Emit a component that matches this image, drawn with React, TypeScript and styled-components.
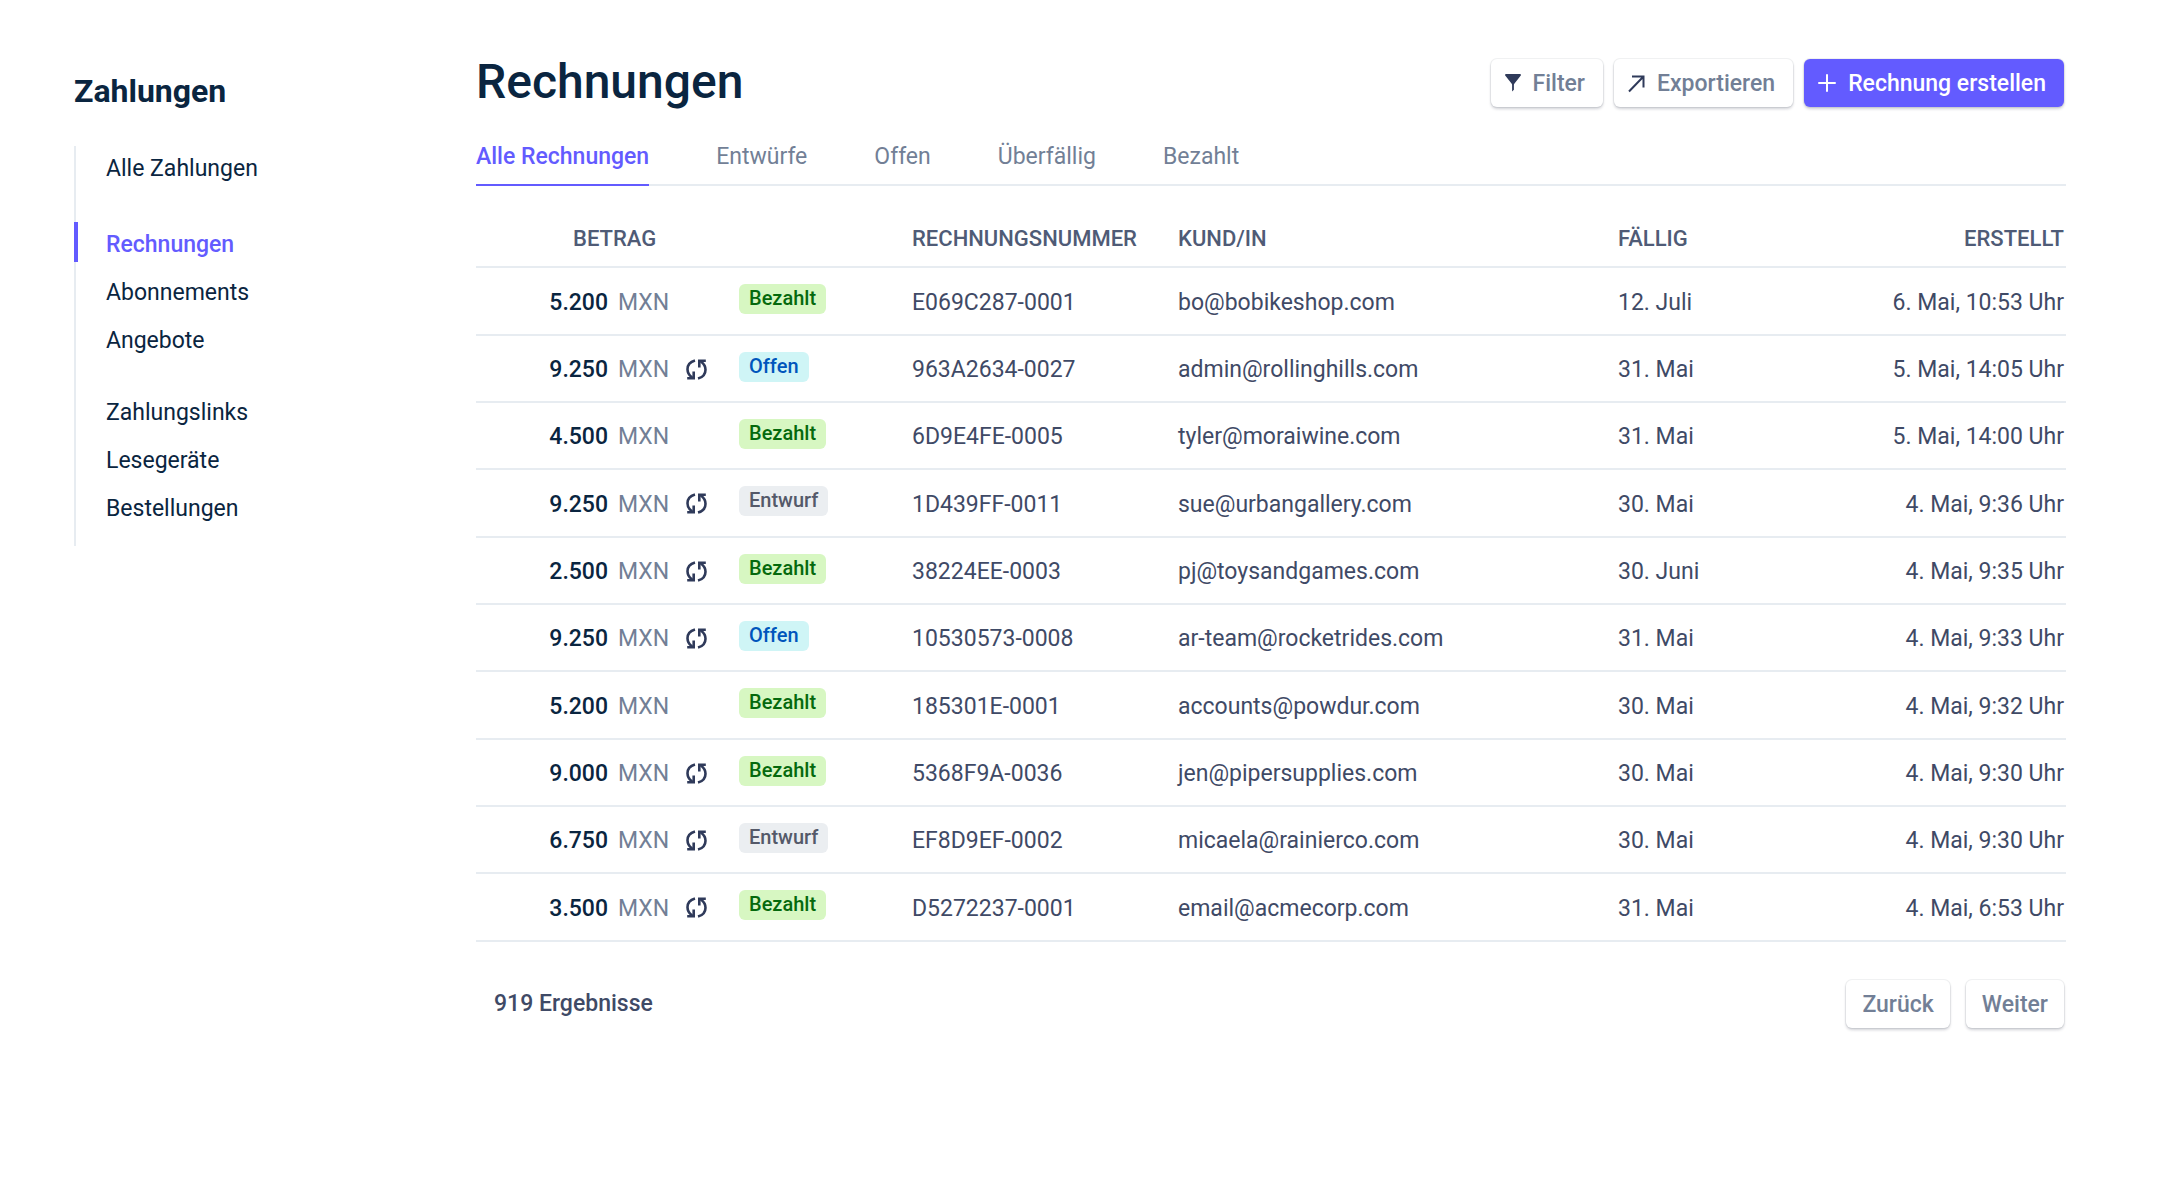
import React from "react";
import styled, { createGlobalStyle, css } from "styled-components";

const color = {
  ink: "#0a2540",
  text: "#3f4a66",
  heading: "#4f5b76",
  muted: "#727f96",
  line: "#e7ecf1",
  accent: "#635bff",
  icon: "#2f3a5a",
};

const GlobalStyle = createGlobalStyle`
  *, *::before, *::after { box-sizing: border-box; }
  body {
    margin: 0;
    background: #fff;
    color: ${color.text};
    font-family: Roboto, "Liberation Sans", Arial, sans-serif;
    font-size: 23px;
    line-height: 32px;
  }
  h1, h2, p, ul { margin: 0; padding: 0; }
`;

const Page = styled.div`
  display: flex;
  padding: 48px 94px 96px 74px;
`;

const Sidebar = styled.aside`
  flex: 0 0 402px;
  padding-top: 23px;
`;

const SidebarTitle = styled.h2`
  color: ${color.ink};
  font-size: 32px;
  font-weight: 700;
  line-height: 40px;
`;

const Nav = styled.nav`
  display: flex;
  flex-direction: column;
  gap: 32px;
  margin-top: 35px;
  padding-bottom: 20px;
  box-shadow: inset 2px 0 0 ${color.line};
`;

const NavGroup = styled.ul`
  display: flex;
  flex-direction: column;
  gap: 8px;
  list-style: none;

  &:first-child { padding-bottom: 4px; }
`;

const NavLink = styled.a<{ $active?: boolean }>`
  display: block;
  height: 40px;
  padding: 7px 0 1px 28px;
  border-left: 4px solid ${(p) => (p.$active ? color.accent : "transparent")};
  color: ${(p) => (p.$active ? color.accent : color.ink)};
  font-weight: ${(p) => (p.$active ? 500 : 400)};
  text-decoration: none;
`;

const Main = styled.main`
  flex: 1;
  min-width: 0;
`;

const Header = styled.header`
  display: flex;
  align-items: center;
  justify-content: space-between;
  padding-right: 2px;
`;

const Title = styled.h1`
  color: ${color.ink};
  font-size: 48px;
  font-weight: 500;
  line-height: 68px;
`;

const Actions = styled.div`
  display: flex;
  gap: 11px;
  padding-top: 2px;
`;

const Button = styled.button<{ $primary?: boolean }>`
  display: flex;
  align-items: center;
  gap: 12px;
  height: 48px;
  padding: 2px 18px 0 14px;
  border: 0;
  border-radius: 6px;
  background: #fff;
  color: ${color.muted};
  font: 500 23px/32px Roboto, "Liberation Sans", Arial, sans-serif;
  box-shadow: 0 0 0 1px rgba(60, 66, 87, 0.07), 0 2px 3px rgba(20, 25, 50, 0.2);
  cursor: pointer;

  ${(p) =>
    p.$primary &&
    css`
      background: ${color.accent};
      color: #fff;
    `}
`;

const PageButton = styled(Button)`
  padding: 2px 16px 0;
`;

const Tabs = styled.div`
  display: flex;
  gap: 67px;
  margin-top: 24px;
  box-shadow: inset 0 -2px 0 ${color.line};
`;

const Tab = styled.button<{ $active?: boolean }>`
  height: 46px;
  padding: 0 0 10px;
  border: 0;
  border-bottom: 2px solid ${(p) => (p.$active ? color.accent : "transparent")};
  background: none;
  color: ${(p) => (p.$active ? color.accent : color.muted)};
  font: ${(p) => (p.$active ? 500 : 400)} 23px/32px Roboto, "Liberation Sans", Arial, sans-serif;
  cursor: pointer;
`;

const Table = styled.table`
  width: 100%;
  margin-top: 14px;
  border-collapse: separate;
  border-spacing: 0;
  table-layout: fixed;
`;

const Col = styled.col<{ $width?: number }>`
  width: ${(p) => (p.$width ? `${p.$width}px` : "auto")};
`;

const HeadCell = styled.th<{ $end?: boolean; $indent?: boolean }>`
  height: 68px;
  padding: 12px ${(p) => (p.$end ? 2 : 0)}px 0 ${(p) => (p.$indent ? 97 : 0)}px;
  border-bottom: 2px solid ${color.line};
  color: ${color.heading};
  font-size: 22px;
  font-weight: 500;
  text-align: ${(p) => (p.$end ? "right" : "left")};
  white-space: nowrap;
`;

const Row = styled.tr`
  height: 67px;

  &:nth-child(3n + 1) { height: 68px; }
`;

const Cell = styled.td<{ $end?: boolean }>`
  padding: 3px ${(p) => (p.$end ? 2 : 0)}px 0 0;
  border-bottom: 2px solid ${color.line};
  text-align: ${(p) => (p.$end ? "right" : "left")};
  white-space: nowrap;
`;

const BadgeCell = styled(Cell)`
  padding: 0 0 4px;
`;

const Amount = styled.div`
  display: flex;
  align-items: center;
`;

const Value = styled.span`
  width: 132px;
  color: ${color.ink};
  font-weight: 500;
  text-align: right;
`;

const Currency = styled.span`
  margin: 0 17px 0 10px;
  color: ${color.muted};
`;

type Status = "Bezahlt" | "Offen" | "Entwurf";

const badgeColors: Record<Status, { bg: string; fg: string }> = {
  Bezahlt: { bg: "#d7f7c2", fg: "#05690d" },
  Offen: { bg: "#cff5f6", fg: "#0055bc" },
  Entwurf: { bg: "#ebeef1", fg: "#545969" },
};

const Badge = styled.span<{ $status: Status }>`
  display: block;
  width: fit-content;
  padding: 0 10px 2px;
  border-radius: 6px;
  background: ${(p) => badgeColors[p.$status].bg};
  color: ${(p) => badgeColors[p.$status].fg};
  font-size: 20px;
  font-weight: 500;
  line-height: 28px;
`;

const Footer = styled.footer`
  display: flex;
  align-items: center;
  justify-content: space-between;
  margin-top: 38px;
  padding: 0 2px 0 18px;
`;

const Count = styled.p`
  font-weight: 500;
`;

const Pager = styled.div`
  display: flex;
  gap: 16px;
`;

const FilterIcon = () => (
  <svg width="16" height="20" viewBox="0 0 16 20" fill={color.icon} aria-hidden="true">
    <path d="M1 0h14c.8 0 1.200.8.800 1.400L9.300 9.800c-.3.400-.4.800-.4 1.200v4.800L7.100 17.500V11c0-.4-.1-.8-.4-1.200L.2 1.400C-.2.8.2 0 1 0z" />
  </svg>
);

const ExportIcon = () => (
  <svg width="17" height="19" viewBox="0 0 17 19" fill="none" stroke={color.icon} strokeWidth="2" aria-hidden="true">
    <path d="M1 16.500 15 2M4 1.500h11.500v11" />
  </svg>
);

const PlusIcon = () => (
  <svg width="18" height="20" viewBox="0 0 18 20" fill="none" stroke="#fff" strokeWidth="2" strokeLinecap="round" aria-hidden="true">
    <path d="M9 1v16M1 9h16" />
  </svg>
);

const RecurringIcon = () => (
  <svg width="21" height="23" viewBox="0 0 21 23" fill="none" stroke={color.icon} strokeWidth="2.600" aria-label="Wiederkehrend">
    <path d="M9 1.400C4.600 2.600 1.500 6 1.500 10.200c0 3.200 1.500 5.900 4.300 8M1.200 19.300h6.500v-6.800" />
    <path d="M12 19.600c4.400-1.200 7.500-4.600 7.500-8.800 0-3.200-1.500-5.900-4.300-8M19.800 1.700h-6.500v6.800" />
  </svg>
);

const navGroups = [
  ["Alle Zahlungen"],
  ["Rechnungen", "Abonnements", "Angebote"],
  ["Zahlungslinks", "Lesegeräte", "Bestellungen"],
];

const tabs = ["Alle Rechnungen", "Entwürfe", "Offen", "Überfällig", "Bezahlt"];

interface Invoice {
  amount: string;
  recurring: boolean;
  status: Status;
  number: string;
  customer: string;
  due: string;
  created: string;
}

const invoice = (
  amount: string,
  recurring: boolean,
  status: Status,
  number: string,
  customer: string,
  due: string,
  created: string
): Invoice => ({ amount, recurring, status, number, customer, due, created });

const invoices: Invoice[] = [
  invoice("5.200", false, "Bezahlt", "E069C287-0001", "bo@bobikeshop.com", "12. Juli", "6. Mai, 10:53 Uhr"),
  invoice("9.250", true, "Offen", "963A2634-0027", "admin@rollinghills.com", "31. Mai", "5. Mai, 14:05 Uhr"),
  invoice("4.500", false, "Bezahlt", "6D9E4FE-0005", "tyler@moraiwine.com", "31. Mai", "5. Mai, 14:00 Uhr"),
  invoice("9.250", true, "Entwurf", "1D439FF-0011", "sue@urbangallery.com", "30. Mai", "4. Mai, 9:36 Uhr"),
  invoice("2.500", true, "Bezahlt", "38224EE-0003", "pj@toysandgames.com", "30. Juni", "4. Mai, 9:35 Uhr"),
  invoice("9.250", true, "Offen", "10530573-0008", "ar-team@rocketrides.com", "31. Mai", "4. Mai, 9:33 Uhr"),
  invoice("5.200", false, "Bezahlt", "185301E-0001", "accounts@powdur.com", "30. Mai", "4. Mai, 9:32 Uhr"),
  invoice("9.000", true, "Bezahlt", "5368F9A-0036", "jen@pipersupplies.com", "30. Mai", "4. Mai, 9:30 Uhr"),
  invoice("6.750", true, "Entwurf", "EF8D9EF-0002", "micaela@rainierco.com", "30. Mai", "4. Mai, 9:30 Uhr"),
  invoice("3.500", true, "Bezahlt", "D5272237-0001", "email@acmecorp.com", "31. Mai", "4. Mai, 6:53 Uhr"),
];

export default function App() {
  return (
    <>
      <GlobalStyle />
      <Page>
        <Sidebar>
          <SidebarTitle>Zahlungen</SidebarTitle>
          <Nav>
            {navGroups.map((group) => (
              <NavGroup key={group[0]}>
                {group.map((label) => (
                  <li key={label}>
                    <NavLink href="#" $active={label === "Rechnungen"}>
                      {label}
                    </NavLink>
                  </li>
                ))}
              </NavGroup>
            ))}
          </Nav>
        </Sidebar>
        <Main>
          <Header>
            <Title>Rechnungen</Title>
            <Actions>
              <Button type="button"><FilterIcon />Filter</Button>
              <Button type="button"><ExportIcon />Exportieren</Button>
              <Button type="button" $primary><PlusIcon />Rechnung erstellen</Button>
            </Actions>
          </Header>
          <Tabs role="tablist">
            {tabs.map((label, i) => (
              <Tab key={label} type="button" role="tab" aria-selected={i === 0} $active={i === 0}>
                {label}
              </Tab>
            ))}
          </Tabs>
          <Table>
            <colgroup>
              <Col $width={263} />
              <Col $width={173} />
              <Col $width={266} />
              <Col $width={440} />
              <Col />
              <Col />
            </colgroup>
            <thead>
              <tr>
                <HeadCell scope="col" $indent>BETRAG</HeadCell>
                <HeadCell scope="col" aria-label="Status" />
                <HeadCell scope="col">RECHNUNGSNUMMER</HeadCell>
                <HeadCell scope="col">KUND/IN</HeadCell>
                <HeadCell scope="col">FÄLLIG</HeadCell>
                <HeadCell scope="col" $end>ERSTELLT</HeadCell>
              </tr>
            </thead>
            <tbody>
              {invoices.map((row) => (
                <Row key={row.number}>
                  <Cell>
                    <Amount>
                      <Value>{row.amount}</Value>
                      <Currency>MXN</Currency>
                      {row.recurring && <RecurringIcon />}
                    </Amount>
                  </Cell>
                  <BadgeCell><Badge $status={row.status}>{row.status}</Badge></BadgeCell>
                  <Cell>{row.number}</Cell>
                  <Cell>{row.customer}</Cell>
                  <Cell>{row.due}</Cell>
                  <Cell $end>{row.created}</Cell>
                </Row>
              ))}
            </tbody>
          </Table>
          <Footer>
            <Count>919 Ergebnisse</Count>
            <Pager>
              <PageButton type="button">Zurück</PageButton>
              <PageButton type="button">Weiter</PageButton>
            </Pager>
          </Footer>
        </Main>
      </Page>
    </>
  );
}
